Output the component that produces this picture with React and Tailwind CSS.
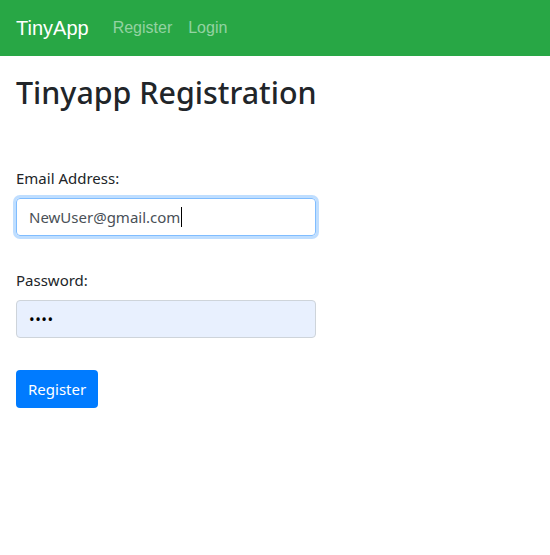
import React from 'react';

const sans = { fontFamily: '"Noto Sans", "Open Sans", sans-serif' };
const arial = { fontFamily: '"Liberation Sans", Arial, sans-serif' };

function App() {
  return (
    <div className="min-h-screen bg-white text-[#212529]" style={sans}>
      <nav className="h-14 bg-[#28a745] flex items-center px-4">
        <span className="text-white text-[20px] mr-6" style={arial}>TinyApp</span>
        <ul className="flex gap-4 text-[16px] text-white/50" style={arial}>
          <li>Register</li>
          <li>Login</li>
        </ul>
      </nav>

      <main className="px-4">
        <h1 className="text-[30.4px] font-medium leading-[1.2] mt-[19px] mb-[55px]">Tinyapp Registration</h1>

        <form className="w-[300px]">
          <div className="mb-8">
            <label className="block text-[15px] leading-6 mb-2">Email Address:</label>
            <div className="h-[38px] flex items-center px-3 border border-[#80bdff] rounded shadow-[0_0_0_3px_rgba(0,123,255,0.25)] text-[#495057] text-[15px]">
              NewUser@gmail.com<span className="inline-block w-px h-[20px] bg-black ml-px"></span>
            </div>
          </div>
          <div className="mb-8">
            <label className="block text-[15px] leading-6 mb-2">Password:</label>
            <div className="h-[38px] flex items-center px-3 border border-[#ced4da] rounded bg-[#e8f0fe] text-black text-[15px] tracking-[0.5px]">
              ••••
            </div>
          </div>
          <button type="button" className="h-[38px] px-3 rounded bg-[#007bff] text-white text-[15px]">Register</button>
        </form>
      </main>
    </div>
  );
}

export default App;
